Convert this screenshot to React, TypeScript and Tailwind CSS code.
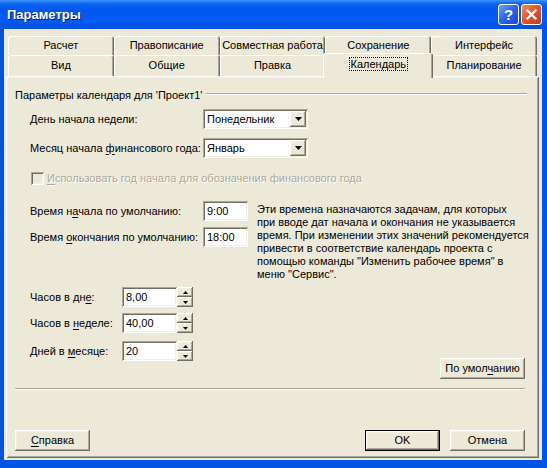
import React from "react";

const raised =
  "shadow-[inset_-1px_-1px_0_#716F64,inset_1px_1px_0_#FFFFFF,inset_-2px_-2px_0_#ACA899,inset_2px_2px_0_#F1EFE2]";
const sunken =
  "shadow-[inset_1px_1px_0_#ACA899,inset_-1px_-1px_0_#FFFFFF,inset_2px_2px_0_#716F64,inset_-2px_-2px_0_#F1EFE2]";

function U({ children }: { children: React.ReactNode }) {
  return <span className="underline decoration-1 underline-offset-[2px]">{children}</span>;
}

function Tab({ label, selected }: { label: string; selected?: boolean }) {
  if (selected) {
    return (
      <div className="relative z-10 -mx-[2px] -mt-[2px] -mb-[2px] rounded-t-[3px] bg-[#ECE9D8] shadow-[inset_1px_1px_0_#FFFFFF,inset_-1px_0_0_#716F64,inset_-2px_0_0_#ACA899] flex items-start justify-center pt-[5px]">
        <span className="outline outline-1 outline-dotted outline-black px-[1px] leading-[12px]">{label}</span>
      </div>
    );
  }
  return (
    <div className="rounded-t-[3px] bg-[#ECE9D8] shadow-[inset_1px_1px_0_#FFFFFF,inset_-1px_0_0_#716F64,inset_-2px_0_0_#ACA899] flex items-center justify-center whitespace-nowrap">
      {label}
    </div>
  );
}

function Combo({ value }: { value: string }) {
  return (
    <div className={`w-[105px] h-[20px] bg-white ${sunken} flex items-center pl-[4px] pr-[2px]`}>
      <span className="flex-1">{value}</span>
      <div className={`w-[16px] h-[16px] bg-[#ECE9D8] ${raised} flex items-center justify-center`}>
        <svg width="7" height="4" viewBox="0 0 7 4">
          <path d="M0 0h7L3.5 4z" fill="#000" />
        </svg>
      </div>
    </div>
  );
}

function TextBox({ value, w }: { value: string; w: string }) {
  return (
    <div className={`${w} h-[20px] bg-white ${sunken} flex items-center pl-[4px]`}>{value}</div>
  );
}

function Spinner({ value }: { value: string }) {
  return (
    <div className="flex h-[20px]">
      <div className={`w-[55px] h-[20px] bg-white ${sunken} flex items-center pl-[4px]`}>{value}</div>
      <div className="w-[16px] flex flex-col">
        <div className={`h-[10px] bg-[#ECE9D8] ${raised} flex items-center justify-center`}>
          <svg width="5" height="3" viewBox="0 0 5 3">
            <path d="M2.5 0L5 3H0z" fill="#000" />
          </svg>
        </div>
        <div className={`h-[10px] bg-[#ECE9D8] ${raised} flex items-center justify-center`}>
          <svg width="5" height="3" viewBox="0 0 5 3">
            <path d="M0 0h5L2.5 3z" fill="#000" />
          </svg>
        </div>
      </div>
    </div>
  );
}

function Btn({ children, w, def }: { children: React.ReactNode; w: string; def?: boolean }) {
  if (def) {
    return (
      <div className={`${w} h-[21px] border border-black`}>
        <div className={`w-full h-full bg-[#ECE9D8] ${raised} flex items-center justify-center`}>{children}</div>
      </div>
    );
  }
  return (
    <div className={`${w} h-[21px] bg-[#ECE9D8] ${raised} flex items-center justify-center`}>{children}</div>
  );
}

export default function App() {
  return (
    <div className="w-[547px] h-[468px] flex flex-col bg-[#0055E5] font-['Liberation_Sans',Arial,sans-serif] text-[11px] leading-[13px] text-black overflow-hidden">
      {/* Title bar */}
      <div className="h-[29px] flex items-center pl-[7px] pr-[5px] bg-[linear-gradient(180deg,#3D95FF_0%,#0A62F0_14%,#0058EE_35%,#005CF4_70%,#004FDC_100%)]">
        <span className="font-['Liberation_Sans',Arial,sans-serif] font-bold text-[13px] text-white [text-shadow:1px_1px_0_#0A1883]">
          Параметры
        </span>
        <div className="ml-auto w-[21px] h-[21px] rounded-[3px] border border-white bg-[linear-gradient(135deg,#6FA3FA_0%,#2A62EE_50%,#1A48D6_100%)] flex items-center justify-center">
          <span className="font-['Liberation_Sans',Arial,sans-serif] font-bold text-[15px] leading-[15px] text-white">?</span>
        </div>
        <div className="ml-[2px] w-[21px] h-[21px] rounded-[3px] border border-white bg-[linear-gradient(135deg,#EE8A66_0%,#E0542A_50%,#C93A10_100%)] flex items-center justify-center">
          <svg width="11" height="11" viewBox="0 0 11 11">
            <path d="M1.5 1.5L9.5 9.5M9.5 1.5L1.5 9.5" stroke="#fff" strokeWidth="2.2" strokeLinecap="square" />
          </svg>
        </div>
      </div>

      {/* Client area */}
      <div className="flex-1 flex pl-[4px] pr-[5px] pb-[8px]">
        <div className="flex-1 bg-[#ECE9D8] flex flex-col">
          {/* Tabs */}
          <div className="pt-[7px] pl-[4px] pr-[5px]">
            <div className="grid grid-cols-5 h-[19px]">
              <Tab label="Расчет" />
              <Tab label="Правописание" />
              <Tab label="Совместная работа" />
              <Tab label="Сохранение" />
              <Tab label="Интерфейс" />
            </div>
            <div className="grid grid-cols-5 h-[21px]">
              <Tab label="Вид" />
              <Tab label="Общие" />
              <Tab label="Правка" />
              <Tab label="Календарь" selected />
              <Tab label="Планирование" />
            </div>
          </div>

          {/* Panel */}
          <div className="flex-1 ml-[2px] mr-[3px] mb-[2px] shadow-[inset_1px_1px_0_#FFFFFF,inset_-1px_-1px_0_#716F64,inset_2px_2px_0_#F1EFE2,inset_-2px_-2px_0_#ACA899] flex flex-col">
            {/* Group header */}
            <div className="mt-[13px] h-[13px] flex">
              <span className="ml-[9px] whitespace-nowrap">Параметры календаря для 'Проект1'</span>
              <div className="flex-1 ml-[4px] mr-[12px] mt-[4px] h-[2px] border-t border-t-[#ACA899] border-b border-b-white" />
            </div>

            {/* Combos */}
            <div className="mt-[7px] h-[20px] flex items-center pl-[24px]">
              <span className="w-[173px]">
                <U>Д</U>ень начала недели:
              </span>
              <Combo value="Понедельник" />
            </div>
            <div className="mt-[9px] h-[20px] flex items-center pl-[24px]">
              <span className="w-[173px] whitespace-nowrap">
                Месяц начала <U>ф</U>инансового года:
              </span>
              <Combo value="Январь" />
            </div>

            {/* Checkbox */}
            <div className="mt-[14px] h-[13px] flex items-center pl-[25px]">
              <div className={`w-[13px] h-[13px] bg-[#ECE9D8] ${sunken}`} />
              <span className="ml-[3px] whitespace-nowrap text-[#ACA899] [text-shadow:1px_1px_0_#FFFFFF]">
                <U>И</U>спользовать год начала для обозначения финансового года
              </span>
            </div>

            {/* Times + description */}
            <div className="mt-[16px] h-[80px] flex pl-[24px]">
              <div className="flex flex-col">
                <div className="h-[20px] flex items-center">
                  <span className="w-[173px]">
                    Время н<U>а</U>чала по умолчанию:
                  </span>
                  <TextBox value="9:00" w="w-[45px]" />
                </div>
                <div className="mt-[6px] h-[20px] flex items-center">
                  <span className="w-[173px] whitespace-nowrap">
                    Время <U>о</U>кончания по умолчанию:
                  </span>
                  <TextBox value="18:00" w="w-[45px]" />
                </div>
              </div>
              <div className="ml-[9px] pt-[2px] whitespace-nowrap">
                Эти времена назначаются задачам, для которых
                <br />
                при вводе дат начала и окончания не указывается
                <br />
                время. При изменении этих значений рекомендуется
                <br />
                привести в соответствие календарь проекта с
                <br />
                помощью команды "Изменить рабочее время" в
                <br />
                меню "Сервис".
              </div>
            </div>

            {/* Spinners + default button */}
            <div className="mt-[6px] h-[92px] flex pl-[24px]">
              <div className="flex flex-col">
                <div className="h-[20px] flex items-center">
                  <span className="w-[92px]">
                    Часов в дн<U>е</U>:
                  </span>
                  <Spinner value="8,00" />
                </div>
                <div className="mt-[6px] h-[20px] flex items-center">
                  <span className="w-[92px]">
                    Часов в <U>н</U>еделе:
                  </span>
                  <Spinner value="40,00" />
                </div>
                <div className="mt-[8px] h-[20px] flex items-center">
                  <span className="w-[92px]">
                    Дней в <U>м</U>есяце:
                  </span>
                  <Spinner value="20" />
                </div>
              </div>
              <div className="ml-auto mr-[14px] mt-[71px]">
                <Btn w="w-[85px]">
                  <span>
                    По умол<U>ч</U>анию
                  </span>
                </Btn>
              </div>
            </div>

            {/* Separator */}
            <div className="mt-[9px] ml-[9px] mr-[14px] h-[2px] border-t border-t-[#ACA899] border-b border-b-white" />

            {/* Bottom buttons */}
            <div className="mt-[40px] flex pl-[9px] pr-[14px]">
              <Btn w="w-[75px]">
                <span>
                  <U>С</U>правка
                </span>
              </Btn>
              <div className="ml-auto">
                <Btn w="w-[75px]" def>
                  OK
                </Btn>
              </div>
              <div className="ml-[10px]">
                <Btn w="w-[75px]">Отмена</Btn>
              </div>
            </div>
          </div>
        </div>
      </div>
    </div>
  );
}
